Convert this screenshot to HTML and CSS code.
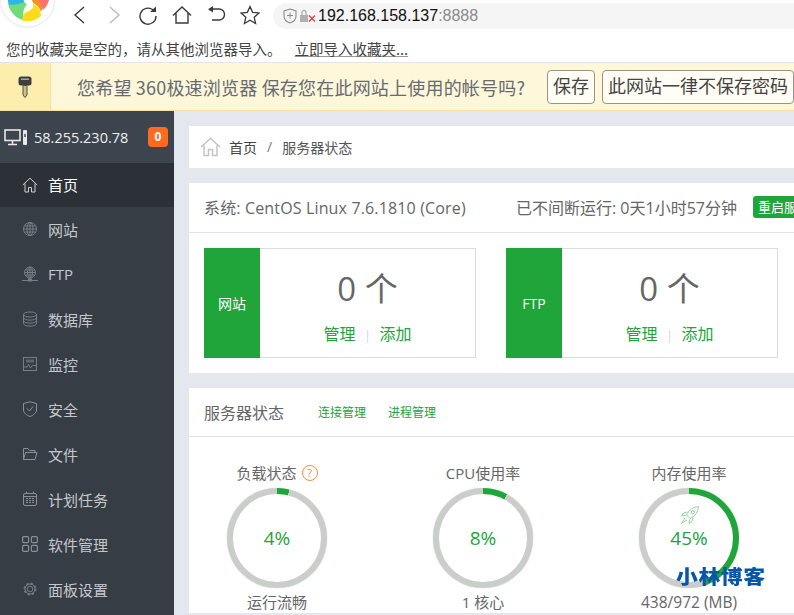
FILE: index.html
```html
<!DOCTYPE html>
<html lang="zh-CN">
<head>
<meta charset="utf-8">
<title>宝塔面板</title>
<link rel="stylesheet" href="styles.css">
</head>
<body>
<div class="page">
  <header class="toolbar">
    <div class="logo-wrap">
      <svg class="logo" width="60" height="32" viewBox="0 0 60 32">
        <defs><filter id="sh" x="-20%" y="-20%" width="140%" height="140%"><feGaussianBlur stdDeviation="1.200"/></filter><filter id="soft"><feGaussianBlur stdDeviation=".5"/></filter></defs>
        <circle cx="27.500" cy="0" r="27" fill="#dcdcdc" filter="url(#sh)"/>
        <circle cx="27.500" cy="0" r="26.500" fill="#fff"/>
        <g filter="url(#soft)">
          <path d="M8 0A20.500 20.500 0 0 0 24 20.500C23 16 23 12 24 9C25 6 27 4 28 3L23 0Z" fill="#6fdc7c"/>
          <path d="M8 0H23L25 2C20 4 15 5 9 5Z" fill="#2fb6e8"/>
          <path d="M22 20.500A20.500 20.500 0 0 0 41 16C41 10 37 6 33 3.500C34 8 31 11 26 12C23.500 14 22.500 17 22 20.500Z" fill="#ffdb1e"/>
          <path d="M32 0L33 3C37 5 40 8 41 12L43 7L40 0Z" fill="#f7931e"/>
          <path d="M39 0L43 10A20.500 20.500 0 0 0 49 0Z" fill="#f8726f"/>
        </g>
        <circle cx="28" cy="0" r="4" fill="#fff"/>
      </svg>
    </div>
    <nav class="nav-icons">
      <svg class="nav-ic" width="20" height="20" viewBox="0 0 20 20"><path d="M14 2L5 10L14 18" fill="none" stroke="#3a3a3a" stroke-width="1.400"/></svg>
      <svg class="nav-ic" width="20" height="20" viewBox="0 0 20 20"><path d="M6 2L15 10L6 18" fill="none" stroke="#bdbdbd" stroke-width="1.400"/></svg>
      <svg class="nav-ic" width="20" height="20" viewBox="0 0 20 20"><path d="M16.500 6.500A8 8 0 1 0 18 11" fill="none" stroke="#3a3a3a" stroke-width="1.400"/><path d="M12 7L18 7L18 1.500Z" fill="#3a3a3a"/></svg>
      <svg class="nav-ic" width="20" height="20" viewBox="0 0 20 20"><path d="M1 10.500L10 2L19 10.500M4 8V18H16V8" fill="none" stroke="#3a3a3a" stroke-width="1.400"/></svg>
      <svg class="nav-ic" width="20" height="20" viewBox="0 0 20 20"><path d="M6 4H13A5.500 5.500 0 0 1 13 15H6" fill="none" stroke="#3a3a3a" stroke-width="1.400"/><path d="M7 1L2 4.300L7 7.500Z" fill="#3a3a3a"/></svg>
      <svg class="nav-ic" width="20" height="20" viewBox="0 0 20 20"><path d="M10 1.500L12.600 7.300L19 8L14.200 12.300L15.600 18.500L10 15.300L4.400 18.500L5.800 12.300L1 8L7.400 7.300Z" fill="none" stroke="#3a3a3a" stroke-width="1.300"/></svg>
    </nav>
    <div class="address">
      <svg width="14" height="16" viewBox="0 0 14 16"><path d="M7 1L13 3V8C13 11.500 10 14 7 15C4 14 1 11.500 1 8V3Z" fill="none" stroke="#8a8a8a" stroke-width="1.100"/><path d="M4 7.500H10M7 4.500V10.500" stroke="#8a8a8a"/></svg>
      <svg class="lock" width="16" height="14" viewBox="0 0 16 14"><rect x="0" y="6" width="8" height="7" fill="#b0b0b0"/><path d="M2 6V3.500A2 2 0 0 1 6 3.500V6" fill="none" stroke="#b0b0b0" stroke-width="1.300"/><path d="M9 6.500L15 12.500M15 6.500L9 12.500" stroke="#e0393e" stroke-width="1.200"/></svg>
      <span class="host">192.168.158.137<span class="port">:8888</span></span>
    </div>
  </header>
  <div class="bookmarks">您的收藏夹是空的，请从其他浏览器导入。<a class="import">立即导入收藏夹...</a></div>
  <div class="infobar">
    <div class="key-cell">
      <svg width="14" height="22" viewBox="0 0 14 22"><rect x="0.500" y="0.500" width="13" height="9" rx="2.500" fill="#3f3f3f"/><rect x="3" y="2.500" width="8" height="1.500" fill="#a5a5a5"/><path d="M5 9.500H9V19L7 21.500L5 19Z" fill="#c9c08f" stroke="#55503a"/></svg>
    </div>
    <div class="info-text">您希望 360极速浏览器 保存您在此网站上使用的帐号吗?</div>
    <button class="info-btn">保存</button>
    <button class="info-btn">此网站一律不保存密码</button>
  </div>
  <div class="panel">
    <aside class="sidebar">
      <div class="side-head">
        <svg width="24" height="17" viewBox="0 0 24 17"><rect x="1" y="1" width="15" height="10.500" fill="none" stroke="#e8e8e8" stroke-width="1.600"/><path d="M4 15.500H13M8.500 12V15" stroke="#e8e8e8" stroke-width="1.600"/><rect x="19" y="1" width="4" height="15" rx="1" fill="#e8e8e8"/><rect x="20.300" y="5" width="1.400" height="3" fill="#3c444d"/></svg>
        <span class="ip">58.255.230.78</span>
        <span class="badge">0</span>
      </div>
      <ul class="menu">
        <li class="menu-item active"><svg class="mi" width="16" height="16" viewBox="0 0 16 16"><path d="M.8 8L8 1.200L15.200 8M3 6.500V15H6.500V10.500H9.500V15H13V6.500" fill="none" stroke="#d0d0d0"/></svg>首页</li>
        <li class="menu-item"><svg class="mi" width="16" height="16" viewBox="0 0 16 16"><g fill="none" stroke="#787e85"><circle cx="8" cy="8" r="6.500"/><ellipse cx="8" cy="8" rx="3" ry="6.500"/><path d="M1.500 8H14.500M2.500 5H13.500M2.500 11H13.500M8 1.500V14.500"/></g></svg>网站</li>
        <li class="menu-item"><svg class="mi" width="16" height="16" viewBox="0 0 16 16"><g fill="none" stroke="#787e85"><circle cx="8" cy="6.500" r="5.500"/><ellipse cx="8" cy="6.500" rx="2.500" ry="5.500"/><path d="M2.500 6.500H13.500M3.500 4H12.500M3.500 9H12.500M8 1V12M0 14.500H16"/></g><rect x="6" y="12.500" width="4" height="3" fill="#787e85"/></svg>FTP</li>
        <li class="menu-item"><svg class="mi" width="16" height="16" viewBox="0 0 16 16"><g fill="none" stroke="#787e85"><ellipse cx="8" cy="3.500" rx="6.500" ry="2.500"/><path d="M1.500 3.500V12.500C1.500 16 14.500 16 14.500 12.500V3.500M1.500 6.500C1.500 10 14.500 10 14.500 6.500M1.500 9.500C1.500 13 14.500 13 14.500 9.500"/></g></svg>数据库</li>
        <li class="menu-item"><svg class="mi" width="16" height="16" viewBox="0 0 16 16"><g fill="none" stroke="#787e85"><rect x="1.500" y="1.500" width="13" height="13"/><path d="M2 11H5L6.500 8.500L8.500 12L10.500 9.500H14"/></g><rect x="4" y="3.500" width="8" height="3" fill="#787e85" opacity=".6"/></svg>监控</li>
        <li class="menu-item"><svg class="mi" width="16" height="16" viewBox="0 0 16 16"><g fill="none" stroke="#8a9096"><path d="M8 .8L14.500 2.500V9C14.500 12 11 14.500 8 15.500C5 14.500 1.500 12 1.500 9V2.500Z"/><path d="M5 7.500L7.500 10L11 5.500"/></g></svg>安全</li>
        <li class="menu-item"><svg class="mi" width="16" height="16" viewBox="0 0 16 16"><path d="M1.500 13.500V2.500H6L7.500 4.500H13V6.500M1.500 13.500L3.500 6.500H15L13 13.500Z" fill="none" stroke="#8a9096"/></svg>文件</li>
        <li class="menu-item"><svg class="mi" width="16" height="16" viewBox="0 0 16 16"><g fill="none" stroke="#8a9096"><rect x="1.500" y="2.500" width="13" height="12" rx="1.500"/><path d="M4.500 .5V2.500M11.500 .5V2.500M1.500 5.500H14.500"/></g><path d="M4 7.500H12M4 9.500H12M4 11.500H12" stroke="#8a9096" stroke-dasharray="2 1"/></svg>计划任务</li>
        <li class="menu-item"><svg class="mi" width="16" height="16" viewBox="0 0 16 16"><g fill="none" stroke="#8a9096" stroke-width="1.200"><rect x=".6" y=".6" width="6" height="6" rx="1.200"/><rect x="9.400" y=".6" width="6" height="6" rx="1.200"/><rect x=".6" y="9.400" width="6" height="6" rx="1.200"/><rect x="9.400" y="9.400" width="6" height="6" rx="1.200"/></g></svg>软件管理</li>
        <li class="menu-item"><svg class="mi" width="16" height="16" viewBox="0 0 16 16"><g fill="none" stroke="#787e85"><circle cx="8" cy="8" r="2.800"/><circle cx="8" cy="8" r="5.500" stroke-width="2" stroke-dasharray="2.200 2.100" opacity=".85"/><circle cx="8" cy="8" r="5"/></g></svg>面板设置</li>
      </ul>
    </aside>
    <main class="content">
      <section class="crumbs">
        <svg width="21" height="20" viewBox="0 0 21 20"><path d="M1 10L10.500 1.500L20 10M4 8.500V18.500H8.500V12.500H12.500V18.500H17V8.500" fill="none" stroke="#c4c4c4" stroke-width="1.500"/></svg>
        <span class="crumb-home">首页</span><span class="crumb-sep">/</span><span class="crumb-cur">服务器状态</span>
      </section>
      <section class="card overview">
        <div class="card-head sys-head">
          <span class="sys-name">系统: CentOS Linux 7.6.1810 (Core)</span>
          <span class="uptime">已不间断运行: 0天1小时57分钟</span>
          <span class="restart">重启服务器</span>
        </div>
        <div class="stat-row">
          <div class="stat">
            <div class="stat-tag">网站</div>
            <div class="stat-body">
              <div class="stat-num">0 个</div>
              <div class="stat-links"><a>管理</a><i class="pipe">|</i><a>添加</a></div>
            </div>
          </div>
          <div class="stat">
            <div class="stat-tag">FTP</div>
            <div class="stat-body">
              <div class="stat-num">0 个</div>
              <div class="stat-links"><a>管理</a><i class="pipe">|</i><a>添加</a></div>
            </div>
          </div>
        </div>
      </section>
      <section class="card status">
        <div class="card-head status-head">
          <span class="status-title">服务器状态</span>
          <a class="status-link">连接管理</a>
          <a class="status-link">进程管理</a>
        </div>
        <div class="gauges">
          <div class="gauge">
            <div class="g-title">负载状态<span class="help">?</span></div>
            <div class="ring" style="--p:4"><span class="pct">4%</span></div>
            <div class="g-foot">运行流畅</div>
          </div>
          <div class="gauge">
            <div class="g-title">CPU使用率</div>
            <div class="ring" style="--p:8"><span class="pct">8%</span></div>
            <div class="g-foot">1 核心</div>
          </div>
          <div class="gauge">
            <div class="g-title">内存使用率</div>
            <div class="ring" style="--p:45">
              <svg class="rocket" width="20" height="20" viewBox="0 0 20 20"><g fill="none" stroke="#8fd3a0"><path d="M18.500 1.500C13 2 9 5 6.500 10L10 13.500C15 11 18 7 18.500 1.500Z"/><circle cx="12.800" cy="7.200" r="1.600"/><path d="M7.500 7L3.500 8L1.500 11L5.500 10.500M13 12.500L12 16.500L9 18.500L9.500 14.500M5 13L1.500 18.500L7 15"/></g></svg>
              <span class="pct">45%</span>
            </div>
            <div class="g-foot g-foot-mem">438/972 (MB)</div>
          </div>
        </div>
      </section>
    </main>
  </div>
  <div class="watermark">小林博客</div>
</div>
</body>
</html>
```
FILE: styles.css
```css
* { box-sizing: border-box; }
html, body { margin: 0; padding: 0; height: 100%; overflow: hidden; background: #fff; }
body { font-family: "Open Sans", "Noto Sans CJK SC", sans-serif; color: #555; }
ul { list-style: none; margin: 0; padding: 0; }
.page { position: relative; width: 794px; height: 615px; overflow: hidden; display: flex; flex-direction: column; }

.toolbar { height: 29px; display: flex; align-items: center; flex: none; }
.logo-wrap { width: 70px; height: 29px; flex: none; align-self: flex-start; position: relative; }
.logo { display: block; position: absolute; top: 0; left: 0; }
.nav-icons { display: flex; width: 203px; gap: 14px; flex: none; }
.nav-ic { display: block; flex: none; }
.address { flex: 1; height: 26px; margin-top: 2px; background: #f5f5f5; border-radius: 13px 0 0 13px; display: flex; align-items: center; padding-left: 10px; }
.lock { margin-left: 3px; margin-right: 2px; }
.host { font: 16px "Liberation Sans", sans-serif; color: #111; }
.port { color: #8a8a8a; }

.bookmarks { height: 34px; flex: none; padding: 5px 0 0 6px; font: 14.500px/29px "Noto Sans CJK SC", sans-serif; color: #444; border-bottom: 1px solid #e2e4e8; white-space: nowrap; }
.import { margin-left: 13px; text-decoration: underline; text-decoration-color: #999; }

.infobar { height: 48px; flex: none; display: flex; align-items: center; background: #fef7d9; border-bottom: 1px solid #f6e2a3; }
.key-cell { width: 51px; height: 47px; background: #fdeeae; border-right: 1px solid #f6e2a3; display: flex; align-items: center; justify-content: center; flex: none; }
.info-text { margin-left: 26px; width: 470px; flex: none; font: 18px "Noto Sans CJK SC", sans-serif; letter-spacing: .2px; color: #666b73; white-space: nowrap; }
.info-btn { height: 34px; padding: 0 5px 3px; margin-right: 7px; border: 1px solid #9c9484; border-radius: 4px; background: #fffdf4; font: 18px "Noto Sans CJK SC", sans-serif; color: #444; white-space: nowrap; flex: none; }
.info-btn:last-child { margin-right: 0; }

.panel { flex: 1; display: flex; min-height: 0; background: #e4e8ee; }
.sidebar { width: 174px; flex: none; background: #363d45; }
.side-head { height: 52px; background: #3c444d; display: flex; align-items: center; padding: 0 6px 0 4px; }
.ip { margin-left: 6px; font: 14.500px "Open Sans", sans-serif; color: #eee; flex: 1; }
.badge { width: 20px; height: 20px; background: #ff6a1f; color: #fff; border-radius: 4px; font: 700 12px/20px "Open Sans", sans-serif; text-align: center; }
.menu-item { height: 45px; display: flex; align-items: center; padding: 0 0 1px 22px; gap: 10px; font-size: 15px; color: #c5c8cb; }
.menu-item.active { height: 44px; background: #2c3138; color: #fff; }
.mi { flex: none; display: block; }

.content { flex: 1; min-width: 0; padding: 15px 0 0 15px; }
.crumbs { height: 42px; background: #fff; display: flex; align-items: center; padding: 0 0 1px 11px; font-size: 14px; color: #444; margin-bottom: 15px; }
.crumb-home { margin-left: 8px; }
.crumb-sep { margin: 0 10px; color: #777; }
.crumb-cur { color: #555; }

.card { background: #fff; margin-bottom: 15px; }
.card-head { height: 50px; border-bottom: 1px solid #e3e3e3; display: flex; align-items: center; padding: 0 0 1px 15px; white-space: nowrap; overflow: hidden; }
.sys-name { font-size: 16px; letter-spacing: .15px; color: #666; width: 312px; flex: none; }
.uptime { font-size: 16px; color: #666; width: 237px; flex: none; }
.restart { background: #20a53a; color: #fff; border-radius: 3px; font-size: 13px; height: 22px; line-height: 22px; padding: 0 5px; flex: none; }

.overview { height: 190px; }
.stat-row { display: flex; padding: 15px 0 0 15px; gap: 30px; }
.stat { width: 272px; height: 110px; border: 1px solid #dcdcdc; display: flex; flex: none; }
.stat-tag { width: 56px; margin: -1px 0 -1px -1px; background: #20a53a; color: #fff; font-size: 14px; display: flex; align-items: center; justify-content: center; flex: none; }
.stat-body { flex: 1; text-align: center; }
.stat-num { font-size: 33px; line-height: 40px; margin-top: 20px; color: #666; }
.stat-links { margin-top: 14px; font-size: 16px; line-height: 22px; color: #20a53a; }
.pipe { font-style: normal; margin: 0 8.500px; color: #cfd8d8; font-size: 13px; }

.status-head { height: 49px; padding-bottom: 0; }
.status-title { font-size: 16px; color: #666; }
.status-link { font-size: 12px; color: #20a53a; margin-left: 22px; }
.status-title + .status-link { margin-left: 34px; }

.gauges { display: flex; padding: 25px 0 0 38px; gap: 106px; }
.gauge { width: 100px; flex: none; display: flex; flex-direction: column; align-items: center; white-space: nowrap; }
.g-title { font-size: 15px; line-height: 22px; height: 22px; color: #666; display: flex; align-items: center; }
.help { width: 16px; height: 16px; border: 1px solid #f0913a; border-radius: 50%; color: #f0913a; font-size: 11px; line-height: 14px; text-align: center; margin-left: 5px; }
.ring { position: relative; width: 100px; height: 100px; margin-top: 4px; border-radius: 50%; background: conic-gradient(#20a53a calc(var(--p) * 1%), #cbcdcb 0); box-shadow: 0 0 1px #6dbf80; display: flex; flex-direction: column; align-items: center; justify-content: center; flex: none; }
.ring::before { content: ""; position: absolute; inset: 6px; border-radius: 50%; background: #fff; }
.pct { position: relative; font-size: 19px; color: #20a53a; line-height: 24px; }
.rocket { position: absolute; top: 17px; left: 41px; }
.g-foot { font-size: 15px; line-height: 22px; margin-top: 3px; color: #666; }
.g-foot-mem { font-size: 15.500px; }

.watermark { position: absolute; left: 676px; top: 564px; font: 900 19px/24px "Noto Sans CJK SC", sans-serif; letter-spacing: .5px; color: #0a56a6; transform: scaleX(1.15); transform-origin: left center; }
```
